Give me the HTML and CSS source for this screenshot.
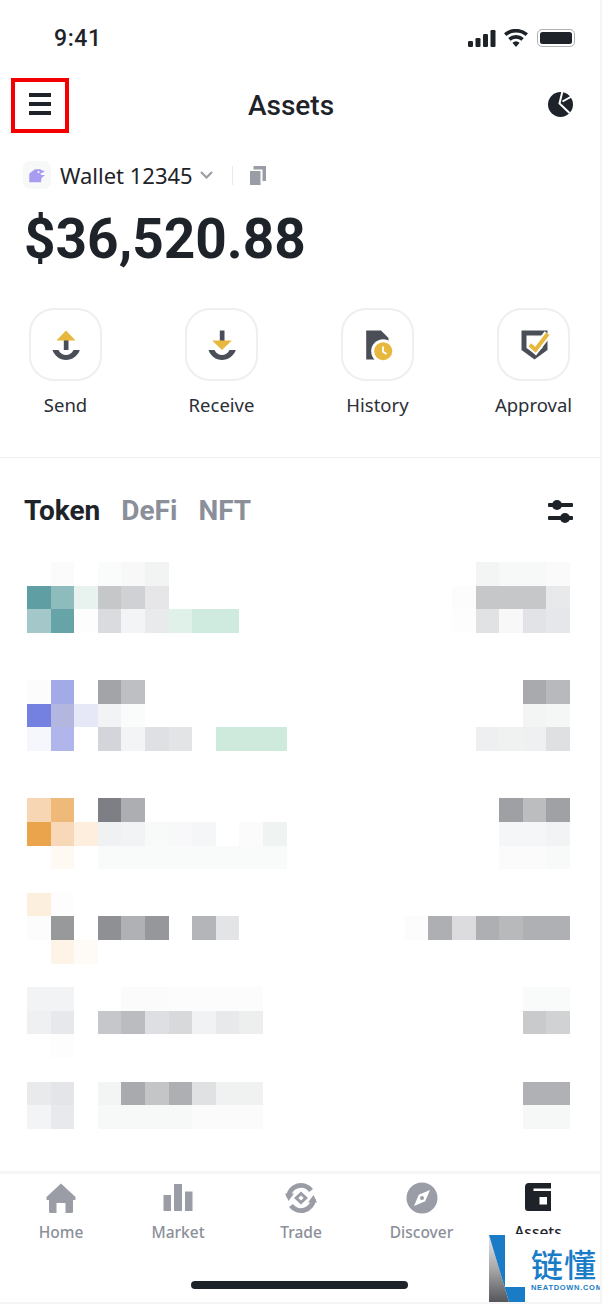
FILE: index.html
```html
<!DOCTYPE html>
<html lang="en">
<head>
<meta charset="utf-8">
<title>Assets</title>
<link rel="stylesheet" href="styles.css">
</head>
<body>
<div class="phone">
  <div class="status">
    <span class="time">9:41</span>
    <div class="status-icons">
      <svg class="ic-signal" viewBox="0 0 28 17"><rect x="0" y="11" width="5" height="6" rx="1.2"/><rect x="7.5" y="8" width="5" height="9" rx="1.2"/><rect x="15" y="4" width="5" height="13" rx="1.2"/><rect x="22.5" y="0" width="5" height="17" rx="1.2"/></svg>
      <svg class="ic-wifi" viewBox="0 0 24 18"><path d="M12 18l-3.6-4.2a5.4 5.4 0 0 1 7.2 0zM6.6 11.7L4.2 9a12 12 0 0 1 15.6 0l-2.4 2.7a8.4 8.4 0 0 0-10.8 0zM2.4 7L0 4.3a18.4 18.4 0 0 1 24 0L21.6 7A15 15 0 0 0 2.4 7z"/></svg>
      <div class="battery"><div class="battery-fill"></div></div>
    </div>
  </div>

  <div class="header">
    <div class="menu">
      <span class="menu-line"></span><span class="menu-line"></span><span class="menu-line"></span>
    </div>
    <h1 class="title">Assets</h1>
    <svg class="ic-pie" viewBox="0 0 25 25"><circle cx="12.5" cy="12.5" r="12.5"/><path class="cut" d="M14.5-1L11.5 11.5 21.5 21M14.5 9.5L26 3" /></svg>
  </div>

  <div class="wallet">
    <div class="wallet-logo">
      <svg viewBox="0 0 28 28"><path class="wl-shape" d="M6.3 12.5L12 8.3h5l5 2.2-4.5 2 .6 1.6H22l-3.5 3-.5 4.2H6.3z"/><circle class="wl-eye" cx="15.5" cy="11" r="1.1"/></svg>
    </div>
    <span class="wallet-name">Wallet 12345</span>
    <svg class="ic-chevron" viewBox="0 0 13 8"><path d="M1 1l5.5 5.5L12 1"/></svg>
    <span class="wallet-sep"></span>
    <svg class="ic-copy" viewBox="0 0 16 19"><rect x="0" y="5" width="10.5" height="14"/><path d="M3.5 0H16v15h-3.5V3.5h-9z"/></svg>
  </div>

  <div class="balance">$36,520.88</div>

  <div class="actions">
    <div class="action">
      <div class="action-btn">
        <svg viewBox="0 0 32 32"><rect class="g" x="13.8" y="10" width="4.7" height="11"/><path class="y" d="M16 1.5l9.5 10h-19z"/><path class="g" d="M2.5 21h6c1.5 3.5 4.5 5 7.5 5s6-1.500 7.500-5h6.300c-2 6-7.800 10-13.800 10S4.500 27 2.500 21z"/></svg>
      </div>
      <span class="action-label">Send</span>
    </div>
    <div class="action">
      <div class="action-btn">
        <svg viewBox="0 0 32 32"><rect class="g" x="13.800" y="1.500" width="4.700" height="11"/><path class="y" d="M6.200 11.500h19.600L16 21z"/><path class="g" d="M2.500 21h6c1.500 3.500 4.500 5 7.500 5s6-1.500 7.500-5h6.300c-2 6-7.800 10-13.800 10S4.500 27 2.500 21z"/></svg>
      </div>
      <span class="action-label">Receive</span>
    </div>
    <div class="action">
      <div class="action-btn">
        <svg viewBox="0 0 32 32"><path class="g" d="M4.200 1.500H19l7.500 7.500v21.500H4.200z"/><circle class="w" cx="21.200" cy="22.200" r="12"/><circle class="y" cx="21.200" cy="22.200" r="9"/><path class="hand" d="M21 17.500v5.200l3.500 2.300"/></svg>
      </div>
      <span class="action-label">History</span>
    </div>
    <div class="action">
      <div class="action-btn">
        <svg viewBox="0 0 32 32"><path class="g" d="M3.500 1.500h26V21l-13 9.500L3.500 21z"/><path class="w" d="M8.500 6.500h16V19l-8 5.500-8-5.500z"/><path class="check-w" d="M11.800 15.800l5.700 5 12.300-16"/><path class="check-y" d="M11.800 15.800l5.700 5 12.300-16"/></svg>
      </div>
      <span class="action-label">Approval</span>
    </div>
  </div>

  <div class="rule"></div>

  <div class="tabs">
    <span class="tab tab-on">Token</span>
    <span class="tab">DeFi</span>
    <span class="tab">NFT</span>
    <svg class="ic-filter" viewBox="0 0 25 24"><rect x="0" y="4" width="25" height="4" rx="1"/><rect x="0" y="17" width="25" height="4" rx="1"/><circle cx="9" cy="6" r="5"/><circle cx="17" cy="19" r="5"/></svg>
  </div>

  <svg class="mosaic" viewBox="0 0 23 24" shape-rendering="crispEdges">
    <g class="mosaic-cells">
      <!-- token 1 -->
      <rect x="1" y="0" width="1" height="1" fill="#fbfbfb"/><rect x="3" y="0" width="1" height="1" fill="#fafbfb"/><rect x="4" y="0" width="1" height="1" fill="#f8f8f8"/><rect x="5" y="0" width="1" height="1" fill="#f2f3f3"/>
      <rect x="19" y="0" width="1" height="1" fill="#f3f4f4"/><rect x="20" y="0" width="2" height="1" fill="#f7f8f8"/><rect x="22" y="0" width="1" height="1" fill="#fafafa"/>
      <rect x="0" y="1" width="1" height="1" fill="#5f9fa3"/><rect x="1" y="1" width="1" height="1" fill="#8ebcbd"/><rect x="2" y="1" width="1" height="1" fill="#e8f3f0"/><rect x="3" y="1" width="1" height="1" fill="#c6c7c9"/><rect x="4" y="1" width="1" height="1" fill="#d0d1d4"/><rect x="5" y="1" width="1" height="1" fill="#e6e6e8"/>
      <rect x="18" y="1" width="1" height="1" fill="#fcfcfc"/><rect x="19" y="1" width="3" height="1" fill="#c6c7c9"/><rect x="22" y="1" width="1" height="1" fill="#e8e9eb"/>
      <rect x="0" y="2" width="1" height="1" fill="#a4c8c9"/><rect x="1" y="2" width="1" height="1" fill="#66a4a7"/><rect x="2" y="2" width="1" height="1" fill="#fdfdfd"/><rect x="3" y="2" width="1" height="1" fill="#dadbdf"/><rect x="4" y="2" width="1" height="1" fill="#f3f4f5"/><rect x="5" y="2" width="1" height="1" fill="#e9eaec"/><rect x="6" y="2" width="1" height="1" fill="#dff1e8"/><rect x="7" y="2" width="2" height="1" fill="#cfeade"/>
      <rect x="18" y="2" width="1" height="1" fill="#fcfdfc"/><rect x="19" y="2" width="1" height="1" fill="#e0e2e4"/><rect x="20" y="2" width="1" height="1" fill="#f8f8f9"/><rect x="21" y="2" width="1" height="1" fill="#e2e3e7"/><rect x="22" y="2" width="1" height="1" fill="#e6e7ea"/>
      <!-- token 2 -->
      <rect x="0" y="5" width="1" height="1" fill="#fcfcfd"/><rect x="1" y="5" width="1" height="1" fill="#a3aae8"/><rect x="3" y="5" width="1" height="1" fill="#a3a4a8"/><rect x="4" y="5" width="1" height="1" fill="#bebfc2"/>
      <rect x="21" y="5" width="1" height="1" fill="#a9aaae"/><rect x="22" y="5" width="1" height="1" fill="#b8b9bc"/>
      <rect x="0" y="6" width="1" height="1" fill="#7481e0"/><rect x="1" y="6" width="1" height="1" fill="#b3b7e0"/><rect x="2" y="6" width="1" height="1" fill="#e6e8f8"/><rect x="3" y="6" width="1" height="1" fill="#f2f3f4"/><rect x="4" y="6" width="1" height="1" fill="#fafbfb"/>
      <rect x="21" y="6" width="1" height="1" fill="#f3f5f5"/><rect x="22" y="6" width="1" height="1" fill="#f5f6f6"/>
      <rect x="0" y="7" width="1" height="1" fill="#f6f7fc"/><rect x="1" y="7" width="1" height="1" fill="#b0b6ec"/><rect x="3" y="7" width="1" height="1" fill="#d4d5da"/><rect x="4" y="7" width="1" height="1" fill="#f3f4f5"/><rect x="5" y="7" width="1" height="1" fill="#dfe0e3"/><rect x="6" y="7" width="1" height="1" fill="#e3e4e6"/><rect x="8" y="7" width="3" height="1" fill="#cdeadd"/>
      <rect x="19" y="7" width="1" height="1" fill="#eeeff0"/><rect x="20" y="7" width="1" height="1" fill="#f0f1f1"/><rect x="21" y="7" width="1" height="1" fill="#eff0f1"/><rect x="22" y="7" width="1" height="1" fill="#dfe0e2"/>
      <!-- token 3 -->
      <rect x="0" y="10" width="1" height="1" fill="#f6d6b3"/><rect x="1" y="10" width="1" height="1" fill="#efb97a"/><rect x="3" y="10" width="1" height="1" fill="#7d7f85"/><rect x="4" y="10" width="1" height="1" fill="#adaeb1"/>
      <rect x="20" y="10" width="1" height="1" fill="#9fa0a3"/><rect x="21" y="10" width="1" height="1" fill="#bcbdbe"/><rect x="22" y="10" width="1" height="1" fill="#a0a1a4"/>
      <rect x="0" y="11" width="1" height="1" fill="#eaa44c"/><rect x="1" y="11" width="1" height="1" fill="#f7d8b8"/><rect x="2" y="11" width="1" height="1" fill="#fdeedd"/><rect x="3" y="11" width="1" height="1" fill="#eff1f3"/><rect x="4" y="11" width="1" height="1" fill="#f2f3f5"/><rect x="5" y="11" width="1" height="1" fill="#f8f9f9"/><rect x="6" y="11" width="1" height="1" fill="#f8f8fa"/><rect x="7" y="11" width="1" height="1" fill="#f5f6f7"/><rect x="9" y="11" width="1" height="1" fill="#fafbfa"/><rect x="10" y="11" width="1" height="1" fill="#eff3f1"/>
      <rect x="20" y="11" width="2" height="1" fill="#f5f6f8"/><rect x="22" y="11" width="1" height="1" fill="#f2f3f5"/>
      <rect x="1" y="12" width="1" height="1" fill="#fef9f2"/><rect x="3" y="12" width="8" height="1" fill="#f9fafa"/>
      <rect x="20" y="12" width="2" height="1" fill="#fbfbfb"/><rect x="22" y="12" width="1" height="1" fill="#f8f9f9"/>
      <!-- token 4 -->
      <rect x="0" y="14" width="1" height="1" fill="#fcefdd"/><rect x="1" y="14" width="1" height="1" fill="#fdfdfd"/>
      <rect x="0" y="15" width="1" height="1" fill="#fbfcfb"/><rect x="1" y="15" width="1" height="1" fill="#97999a"/><rect x="3" y="15" width="1" height="1" fill="#8e9094"/><rect x="4" y="15" width="1" height="1" fill="#b0b1b4"/><rect x="5" y="15" width="1" height="1" fill="#96979b"/><rect x="7" y="15" width="1" height="1" fill="#b4b5b8"/><rect x="8" y="15" width="1" height="1" fill="#e3e4e6"/>
      <rect x="16" y="15" width="1" height="1" fill="#fcfcfc"/><rect x="17" y="15" width="1" height="1" fill="#aeafb3"/><rect x="18" y="15" width="1" height="1" fill="#dcdcde"/><rect x="19" y="15" width="1" height="1" fill="#aeafb2"/><rect x="20" y="15" width="1" height="1" fill="#b8b9bb"/><rect x="21" y="15" width="2" height="1" fill="#afb0b3"/>
      <rect x="1" y="16" width="1" height="1" fill="#fdf3e6"/><rect x="2" y="16" width="1" height="1" fill="#fefbf7"/>
      <!-- token 5 -->
      <rect x="0" y="18" width="2" height="1" fill="#f2f3f4"/><rect x="4" y="18" width="2" height="1" fill="#fafbfa"/><rect x="6" y="18" width="4" height="1" fill="#fcfcfc"/>
      <rect x="21" y="18" width="2" height="1" fill="#f9fafa"/>
      <rect x="0" y="19" width="1" height="1" fill="#eff0f2"/><rect x="1" y="19" width="1" height="1" fill="#e7e8eb"/><rect x="3" y="19" width="1" height="1" fill="#c6c7ca"/><rect x="4" y="19" width="1" height="1" fill="#bbbcc0"/><rect x="5" y="19" width="1" height="1" fill="#dedfe2"/><rect x="6" y="19" width="1" height="1" fill="#d8d9db"/><rect x="7" y="19" width="1" height="1" fill="#f1f2f3"/><rect x="8" y="19" width="1" height="1" fill="#e8e9eb"/><rect x="9" y="19" width="1" height="1" fill="#edeeee"/>
      <rect x="21" y="19" width="1" height="1" fill="#c9cacc"/><rect x="22" y="19" width="1" height="1" fill="#d1d2d3"/>
      <rect x="1" y="20" width="1" height="1" fill="#fdfdfd"/>
      <!-- token 6 -->
      <rect x="0" y="22" width="1" height="1" fill="#e9eaec"/><rect x="1" y="22" width="1" height="1" fill="#e4e5e9"/><rect x="3" y="22" width="1" height="1" fill="#f3f4f4"/><rect x="4" y="22" width="1" height="1" fill="#a9aaae"/><rect x="5" y="22" width="1" height="1" fill="#c4c5c7"/><rect x="6" y="22" width="1" height="1" fill="#adafb3"/><rect x="7" y="22" width="1" height="1" fill="#e0e1e3"/><rect x="8" y="22" width="2" height="1" fill="#f0f1f1"/>
      <rect x="21" y="22" width="2" height="1" fill="#b0b1b5"/>
      <rect x="0" y="23" width="1" height="1" fill="#f3f4f6"/><rect x="1" y="23" width="1" height="1" fill="#e8e9ed"/><rect x="3" y="23" width="4" height="1" fill="#f7f8f8"/><rect x="7" y="23" width="3" height="1" fill="#fbfbfb"/>
      <rect x="21" y="23" width="2" height="1" fill="#f6f7f7"/>
    </g>
  </svg>

  <nav class="nav">
    <div class="nav-items">
      <div class="nav-item">
        <svg class="nav-ic" viewBox="0 0 32 32"><path d="M16 1.500L30.500 15v3H28v11.500a1.500 1.500 0 0 1-1.500 1.500H20.500V21h-9v10H5.500A1.500 1.500 0 0 1 4 29.500V18H1.500v-3z"/></svg>
        <span class="nav-label">Home</span>
      </div>
      <div class="nav-item">
        <svg class="nav-ic" viewBox="0 0 32 32"><rect x="1.500" y="13" width="7.500" height="16"/><rect x="12" y="2" width="8" height="27"/><rect x="23" y="9.500" width="7.500" height="19.500"/></svg>
        <span class="nav-label">Market</span>
      </div>
      <div class="nav-item">
        <svg class="nav-ic trade" viewBox="0 0 32 32"><path class="arc" d="M3.500 15A12.500 12.500 0 0 1 26 8.500M28.500 17A12.500 12.500 0 0 1 6 23.500"/><path d="M0 11.500h9L3.500 19zM32 20.500h-9l5.500-7.500z"/><path d="M16 9.500l7 6.500-7 6.500-7-6.500zM16 13.500L13.300 16l2.700 2.500 2.700-2.500z" fill-rule="evenodd"/></svg>
        <span class="nav-label">Trade</span>
      </div>
      <div class="nav-item">
        <svg class="nav-ic" viewBox="0 0 32 32"><circle cx="16" cy="16" r="15.500"/><path class="compass" d="M24 8l-4.800 11.200L8 24l4.800-11.200zM16 14a2 2 0 1 0 0 4 2 2 0 0 0 0-4z" fill-rule="evenodd"/></svg>
        <span class="nav-label">Discover</span>
      </div>
      <div class="nav-item nav-item-on">
        <svg class="nav-ic wallet-ic" viewBox="0 0 26 28"><path d="M4 0h22v5.500H8.500V8H26v20H3a3 3 0 0 1-3-3V4a4 4 0 0 1 4-4z"/><rect class="w" x="14.500" y="14" width="7.500" height="7.500"/></svg>
        <span class="nav-label">Assets</span>
      </div>
    </div>
    <div class="home-bar"></div>
  </nav>

  <div class="watermark">
    <svg class="wm-logo" viewBox="0 0 36 67">
      <defs><linearGradient id="wmg" x1="0" y1="0" x2="0" y2="1"><stop offset="0" stop-color="#e8e8e8"/><stop offset="0.5" stop-color="#a8a8aa"/><stop offset="1" stop-color="#55565a"/></linearGradient></defs>
      <path fill="url(#wmg)" d="M0 0l20 67H0z"/>
      <path fill="#1a7cc7" d="M0 0h16v52h20v15H20z"/>
    </svg>
    <div class="wm-text">
      <span class="wm-cn">链懂</span>
      <span class="wm-en">NEATDOWN.COM</span>
    </div>
  </div>
</div>
</body>
</html>
```

FILE: styles.css
```css
* { box-sizing: border-box; margin: 0; padding: 0; }
html, body { width: 602px; height: 1304px; overflow: hidden; }
body { background: #f5f5f6; color: #1e2329; font-family: "Noto Sans", "Liberation Sans", sans-serif; }

.phone { position: relative; width: 600px; height: 1302px; background: #fff; overflow: hidden; display: flex; flex-direction: column; }

.status { height: 78px; padding: 0 25px 2px 54px; display: flex; align-items: center; justify-content: space-between; }
.time { font: 500 23px/1 Roboto, sans-serif; letter-spacing: 0.6px; }
.status-icons { display: flex; align-items: center; }
.ic-signal { width: 28px; height: 17px; fill: #1e2329; }
.ic-wifi { width: 24px; height: 18px; margin-left: 8px; fill: #1e2329; }
.battery { width: 38px; height: 18px; margin-left: 9px; padding: 2px; border: 1.500px solid #aeb0b4; border-radius: 5px; }
.battery-fill { width: 100%; height: 100%; background: #1e2329; border-radius: 2.500px; }

.header { height: 55px; padding: 0 27px 0 11px; display: grid; grid-template-columns: 1fr auto 1fr; align-items: center; }
.menu { width: 58px; height: 55px; border: 4px solid #f50000; display: flex; flex-direction: column; align-items: center; justify-content: center; gap: 5px; padding-bottom: 4px; }
.menu-line { width: 22px; height: 4px; background: #1e2329; }
.title { font: 500 28px/1 Roboto, sans-serif; margin-left: -2px; }
.ic-pie { justify-self: end; width: 25px; height: 25px; margin-bottom: 2px; fill: #1e2329; }
.ic-pie .cut { fill: none; stroke: #fff; stroke-width: 2; }

.wallet { margin-top: 28px; height: 28px; padding-left: 23px; display: flex; align-items: center; }
.wallet-logo { width: 28px; height: 28px; background: #f7f8f8; border-radius: 7px; }
.wallet-logo svg { display: block; width: 28px; height: 28px; }
.wl-shape { fill: #a79cf0; }
.wl-eye { fill: #fff; }
.wallet-name { margin-left: 9px; font-size: 22px; line-height: 28px; }
.ic-chevron { width: 13px; height: 8px; margin-left: 7px; fill: none; stroke: #9a9da6; stroke-width: 2.200; }
.wallet-sep { width: 1px; height: 19px; margin-left: 19px; background: #e9eaec; }
.ic-copy { width: 16px; height: 19px; margin-left: 17px; fill: #9a9da6; }

.balance { margin-top: 18px; padding-left: 24px; font: 700 55px/64px Roboto, sans-serif; }

.actions { margin-top: 37px; padding: 0 30px 0 29px; display: flex; justify-content: space-between; }
.action { width: 73px; display: flex; flex-direction: column; align-items: center; }
.action-btn { width: 73px; height: 73px; border: 2px solid #eeeff0; border-radius: 25px; display: flex; align-items: center; justify-content: center; }
.action-btn svg { width: 32px; height: 32px; }
.action-label { margin-top: 12px; font-size: 18.500px; line-height: 24px; white-space: nowrap; color: #2b2f36; }
.g { fill: #4a4e57; }
.y { fill: #e8b83e; }
.w { fill: #fff; }
.hand { fill: none; stroke: #fff; stroke-width: 1.800; }
.check-w { fill: none; stroke: #fff; stroke-width: 8; }
.check-y { fill: none; stroke: #e8b83e; stroke-width: 4; }

.rule { margin-top: 40px; height: 1px; background: #eeeff0; }

.tabs { margin-top: 35px; height: 36px; padding: 0 27px 0 24px; display: flex; align-items: center; gap: 21px; }
.tab { font: 700 28px/36px Roboto, sans-serif; color: #8a8f9a; }
.tab-on { color: #1e2329; }
.ic-filter { width: 25px; height: 24px; margin-left: auto; fill: #1e2329; }

.mosaic { display: block; flex: none; margin: 33px 0 0 27px; width: 543px; height: 567px; }
.mosaic-cells { filter: url(#none); }
.mosaic rect { filter: blur(0.020px); }

.nav { position: absolute; left: 0; right: 0; bottom: 0; height: 131px; background: #fff; border-top: 3px solid #f6f6f7; }
.nav-items { display: grid; grid-template-columns: 120px 114px 132px 109px 124px; padding: 8px 0 0 1px; }
.nav-item { display: flex; flex-direction: column; align-items: center; }
.nav-ic { width: 32px; height: 32px; fill: #9a9da6; }
.nav-label { margin-top: 8px; font-size: 15.500px; line-height: 20px; font-weight: 500; color: #8b8f99; }
.nav-item-on .nav-label { color: #1e2329; }
.wallet-ic { width: 26px; height: 28px; margin: 1px 0 3px; fill: #1e2329; }
.trade .arc { fill: none; stroke: #9a9da6; stroke-width: 5; }
.compass { fill: #fff; }
.home-bar { position: absolute; left: 191px; top: 107px; width: 217px; height: 8px; border-radius: 4px; background: #1e2329; }

.watermark { position: absolute; right: 0; bottom: 0; width: 114px; height: 68px; background: #fff; display: flex; padding-left: 3px; }
.wm-logo { width: 36px; height: 67px; flex: none; margin-top: 1px; }
.wm-text { margin-left: 6px; display: flex; flex-direction: column; }
.wm-cn { font: 500 32px/32px "Noto Sans CJK SC", sans-serif; color: #1a7cc7; margin-top: 13px; letter-spacing: 1px; white-space: nowrap; }
.wm-en { font: 700 7.500px/9px "Liberation Sans", sans-serif; color: #1a7cc7; margin-top: 4px; letter-spacing: 0.700px; white-space: nowrap; }
```
